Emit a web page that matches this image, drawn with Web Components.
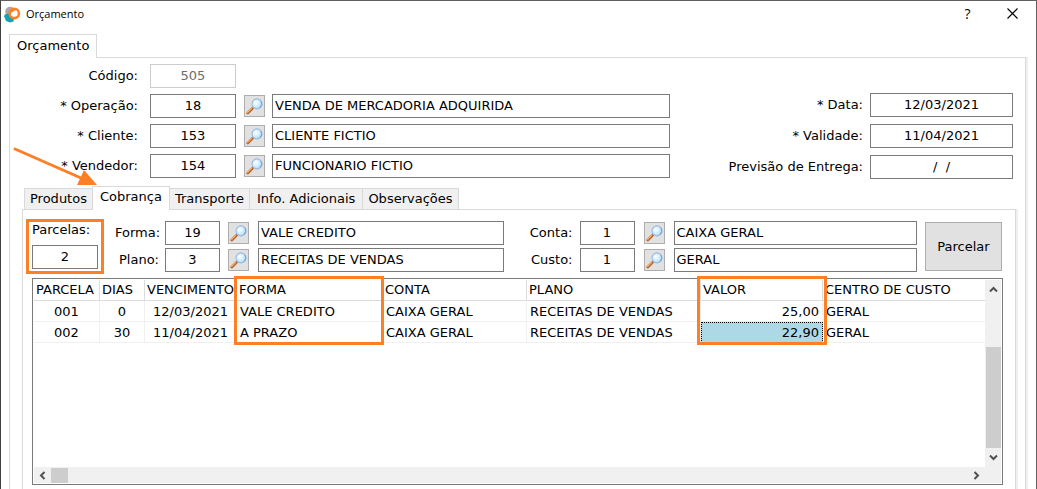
<!DOCTYPE html>
<html lang="pt-BR">
<head>
<meta charset="utf-8">
<title>Orçamento</title>
<style>
  body { margin: 0; background: #fff; color: #000; font: 13px/16px "DejaVu Sans", Verdana, sans-serif; }
</style>
</head>
<body>
<budget-window></budget-window>

<script>
const define = (name, html, setup) => {
  const template = document.createElement('template');
  template.innerHTML = '<style>*, :host { box-sizing: border-box }</style>' + html;
  customElements.define(name, class extends HTMLElement {
    constructor() {
      super();
      this.attachShadow({ mode: 'open' }).append(template.content.cloneNode(true));
    }
    connectedCallback() { if (setup) setup(this, this.shadowRoot); }
  });
};

/* Square button with a magnifying glass */
define('search-button', `
  <style>
    :host { display: block; flex: none; }
    button { display: flex; align-items: center; justify-content: center; width: 21px; height: 22px;
      padding: 0; border: 1px solid #adadad; background: #e1e1e1; }
  </style>
  <button type="button" aria-label="Pesquisar">
    <svg width="17" height="17" viewBox="0 0 17 17" aria-hidden="true">
      <defs>
        <radialGradient id="lens" cx=".38" cy=".38" r=".7">
          <stop offset="0" stop-color="#fff"/><stop offset=".5" stop-color="#d2effd"/><stop offset="1" stop-color="#9ed4f6"/>
        </radialGradient>
      </defs>
      <path d="M7.6 9.4 5.8 11.2" stroke="#8fa0b8" stroke-width="2"/>
      <path d="M6 10.8 1.8 15" stroke="#b5652f" stroke-width="2.8" stroke-linecap="round"/>
      <path d="M5.3 10.6 1.6 14.2" stroke="#f5b06c" stroke-width="1.4" stroke-linecap="round"/>
      <circle cx="11" cy="5.9" r="5" fill="url(#lens)" stroke="#9db8e0" stroke-width="1.1"/>
      <path d="M15 3.2a4.9 4.9 0 0 1-1.2 6.4" fill="none" stroke="#7f9fd2" stroke-width="1"/>
    </svg>
  </button>`);

/* Label and one text box */
define('text-field', `
  <style>
    :host { display: flex; align-items: center; justify-content: flex-end; gap: var(--gap, 7px); }
    :host([stacked]) { flex-direction: column; align-items: flex-start; gap: 7px; }
    label { white-space: pre; }
    input { width: var(--field-width, 143px); height: 24px; padding: 0 4px 2px; border: 1px solid #7a7a7a; border-radius: 0;
      background: #fff; color: #000; font: inherit; text-align: center; outline: 0; }
    input:disabled { border-color: #ccc; color: #6d6d6d; }
  </style>
  <label for="box"></label><input id="box" type="text">`,
  (host, root) => {
    root.querySelector('label').textContent = host.getAttribute('label');
    const box = root.querySelector('input');
    box.value = host.getAttribute('value');
    box.disabled = host.hasAttribute('disabled');
  });

/* Label, code box, search button and description box */
define('lookup-field', `
  <style>
    :host { display: flex; align-items: center; }
    label { width: var(--label-width); text-align: right; white-space: nowrap; flex: none; }
    input { height: 24px; border: 1px solid #7a7a7a; border-radius: 0; background: #fff; color: #000; font: inherit; outline: 0; }
    #code { width: var(--code-width); margin: 0 var(--code-gap, 8px) 0 var(--gap, 6px); padding: 0 2px 2px; text-align: center; flex: none; }
    #name { flex: 1; min-width: 0; margin-left: var(--name-gap, 9px); padding: 0 2px 2px; }
  </style>
  <label for="code"></label><input id="code" type="text"><search-button></search-button><input id="name" type="text" aria-label="Descrição">`,
  (host, root) => {
    root.querySelector('label').textContent = host.getAttribute('label');
    root.querySelector('#code').value = host.getAttribute('code');
    root.querySelector('#name').value = host.getAttribute('name');
  });

define('page-tab', `
  <style>
    :host { display: block; flex: none; }
    button { height: 21px; padding: 0 5px; border: 1px solid #d9d9d9; border-bottom: 0; margin-left: -1px;
      background: #f0f0f0; color: #000; font: inherit; display: block; }
    :host([wide]) button { padding: 0 7px; }
    :host([selected]) button { position: relative; height: 24px; margin-bottom: -1px; padding: 0 7px 3px; background: #fff; }
  </style>
  <button type="button" role="tab"><slot></slot></button>`);

define('title-bar', `
  <style>
    :host { display: flex; align-items: center; height: 25px; padding: 0 17px 0 3px; font: 12px/16px "Open Sans", "Noto Sans", sans-serif; }
    h1 { flex: 1; margin: 0 0 0 4px; font: inherit; font-size: 11px; }
    button { display: flex; align-items: center; justify-content: center; width: 13px; height: 20px; padding: 0; border: 0; background: none; font: 14px/16px "Open Sans", sans-serif; color: #000; }
    button + button { margin-left: 32px; }
  </style>
  <svg width="18" height="18" viewBox="0 0 18 18" aria-hidden="true">
    <circle cx="6" cy="6.5" r="4.8" fill="#aaa8a8"/>
    <path d="M0 11 1.5 9l3-.5 5.5 4.5-.5 3.5-3.5 1-4-1.5z" fill="#12a2b4"/>
    <circle cx="10.3" cy="8.5" r="4.6" fill="#fff" stroke="#ff7f27" stroke-width="2.6"/>
    <path d="M7.4 8.2 8.8 7.2l1.4.2 1.5-1.9 1.4.6v4.7l-4.9.5-.8-.6z" fill="#fff"/>
    <path d="M6.2 4.4h5.2L10 6.3 7.4 7.4 6 9z" fill="#ff7f27"/>
  </svg>
  <h1>Orçamento</h1>
  <button type="button" aria-label="Ajuda">?</button>
  <button type="button" aria-label="Fechar"><svg width="11" height="11" viewBox="0 0 11 11"><path d="M.5.5l10 10M10.5.5l-10 10" stroke="#000" stroke-width="1.1"/></svg></button>`);

define('installment-grid', `
  <style>
    :host { position: relative; display: grid; grid-template: 1fr 16px / 1fr 16px; border: 1px solid #7a7a7a; padding: 1px; min-height: 120px; }
    .view { overflow: hidden; }
    table { width: 100%; table-layout: fixed; border-collapse: separate; border-spacing: 0; }
    th, td { height: 21px; padding: 0 2px; border: solid #f0f0f0; border-width: 0 1px 1px 0; font-weight: normal; text-align: left; white-space: nowrap; overflow: hidden; line-height: 16px; }
    th { border-color: #dcdcdc; }
    th:last-child, td:last-child { border-right: 0; }
    td { padding: 1px 3px 0; }
    .mid { text-align: center; }
    .num { text-align: right; }
    .active { background: #add8e6; border: 1px dotted #000; }
    .bar { display: flex; justify-content: space-between; align-items: center; background: #f0f0f0; }
    .bar.v { flex-direction: column; }
    .bar button { width: 17px; height: 19px; padding: 0; border: 0; background: none; display: flex; align-items: center; justify-content: center; flex: none; }
    .bar.h button { height: 16px; }
    .thumb { background: #cdcdcd; }
    .v .thumb { width: 15px; height: 101px; margin: auto 0 0; }
    .h .thumb { width: 17px; height: 15px; margin-right: auto; }
    .corner { background: #f0f0f0; }
    path { fill: none; stroke: #505050; stroke-width: 2; }
    .mark { position: absolute; top: -3px; height: 69px; border: 3px solid #ff7f27; pointer-events: none; }
    .forma { left: 201px; width: 150px; }
    .valor { left: 664px; width: 130px; }
  </style>
  <div class="view">
    <table>
      <colgroup><col style="width:66px"><col style="width:45px"><col style="width:92px"><col style="width:146px"><col style="width:144px"><col style="width:174px"><col style="width:122px"><col></colgroup>
      <thead><tr><th>PARCELA</th><th>DIAS</th><th>VENCIMENTO</th><th>FORMA</th><th>CONTA</th><th>PLANO</th><th>VALOR</th><th>CENTRO DE CUSTO</th></tr></thead>
      <tbody>
        <tr><td class="mid">001</td><td class="mid">0</td><td class="mid">12/03/2021</td><td>VALE CREDITO</td><td>CAIXA GERAL</td><td>RECEITAS DE VENDAS</td><td class="num">25,00</td><td>GERAL</td></tr>
        <tr><td class="mid">002</td><td class="mid">30</td><td class="mid">11/04/2021</td><td>A PRAZO</td><td>CAIXA GERAL</td><td>RECEITAS DE VENDAS</td><td class="num active">22,90</td><td>GERAL</td></tr>
      </tbody>
    </table>
  </div>
  <div class="bar v">
    <button type="button" aria-label="Subir"><svg width="9" height="7"><path d="M1 5.5 4.5 2 8 5.5"/></svg></button>
    <div class="thumb"></div>
    <button type="button" aria-label="Descer"><svg width="9" height="7"><path d="M1 1.5 4.5 5 8 1.5"/></svg></button>
  </div>
  <div class="bar h">
    <button type="button" aria-label="Esquerda"><svg width="7" height="9"><path d="M5.5 1 2 4.5 5.5 8"/></svg></button>
    <div class="thumb"></div>
    <button type="button" aria-label="Direita"><svg width="7" height="9"><path d="M1.5 1 5 4.5 1.5 8"/></svg></button>
  </div>
  <div class="corner"></div>
  <div class="mark forma"></div><div class="mark valor"></div>`);

define('billing-form', `
  <style>
    :host { display: flex; align-items: flex-start; }
    .count { --field-width: 66px; margin-top: -2px; padding: 0 3px 2px; border: 3px solid #ff7f27; flex: none; }
    .pair { display: grid; gap: 3px; flex: 1 1 0; min-width: 0; --code-width: 55px; }
    .pay { --label-width: 44px; margin-left: 11px; }
    .account { --label-width: 44px; --gap: 7px; --code-gap: 9px; margin-left: 25px; }
    button { flex: none; width: 77px; height: 49px; margin: 1px 0 0 8px; padding: 0; border: 1px solid #adadad; background: #e1e1e1; color: #000; font: inherit; }
  </style>
  <text-field class="count" stacked label="Parcelas:" value="2"></text-field>
  <div class="pair pay">
    <lookup-field label="Forma:" code="19" name="VALE CREDITO"></lookup-field>
    <lookup-field label="Plano:" code="3" name="RECEITAS DE VENDAS"></lookup-field>
  </div>
  <div class="pair account">
    <lookup-field label="Conta:" code="1" name="CAIXA GERAL"></lookup-field>
    <lookup-field label="Custo:" code="1" name="GERAL"></lookup-field>
  </div>
  <button type="button">Parcelar</button>`);

define('budget-header', `
  <style>
    :host { display: flex; justify-content: space-between; align-items: flex-start; }
    .left { display: grid; gap: 6px; flex: 0 1 648px; --label-width: 116px; --code-width: 86px; --gap: 12px; --name-gap: 7px; --field-width: 86px; }
    .code { justify-self: start; width: 214px; }
    .right { display: grid; gap: 7px; margin-top: 29px; }
  </style>
  <div class="left">
    <text-field class="code" label="Código:" value="505" disabled></text-field>
    <lookup-field label="* Operação:" code="18" name="VENDA DE MERCADORIA ADQUIRIDA"></lookup-field>
    <lookup-field label="* Cliente:" code="153" name="CLIENTE FICTIO"></lookup-field>
    <lookup-field label="* Vendedor:" code="154" name="FUNCIONARIO FICTIO"></lookup-field>
  </div>
  <div class="right">
    <text-field label="* Data:" value="12/03/2021"></text-field>
    <text-field label="* Validade:" value="11/04/2021"></text-field>
    <text-field label="Previsão de Entrega:" value="/  /"></text-field>
  </div>`);

define('budget-window', `
  <style>
    :host { position: relative; display: flex; flex-direction: column; min-height: 100vh; border: solid #606060; border-width: 1px 1px 0; border-left-color: #404040; }
    .main-tab { display: block; width: max-content; height: 24px; margin: 8px 0 -1px 8px; padding: 0 7px 2px; position: relative;
      border: 1px solid #d9d9d9; border-bottom: 0; background: #fff; color: #000; font: inherit; }
    .page, .inner { display: flex; flex-direction: column; flex: 1; border: 1px solid #d9d9d9; border-bottom: 0; box-shadow: 2px 0 #f0f0f0; }
    .page { margin: 0 10px 0 8px; padding: 6px 12px 0; }
    nav { display: flex; align-items: flex-end; margin: 7px 0 0 3px; }
    .inner { margin: 0 -3px 0 0; padding: 11px 12px 4px 3px; }
    billing-form { margin-right: 1px; }
    installment-grid { flex: 1; margin: 4px 0 0 6px; }
    .arrow { position: absolute; left: 12px; top: 145px; pointer-events: none; }
  </style>
  <title-bar></title-bar>
  <button type="button" class="main-tab" role="tab">Orçamento</button>
  <section class="page">
    <budget-header></budget-header>
    <nav role="tablist">
      <page-tab>Produtos</page-tab><page-tab selected>Cobrança</page-tab><page-tab>Transporte</page-tab><page-tab wide>Info. Adicionais</page-tab><page-tab>Observações</page-tab>
    </nav>
    <div class="inner">
      <billing-form></billing-form>
      <installment-grid></installment-grid>
    </div>
  </section>
  <svg class="arrow" width="86" height="42" viewBox="0 0 86 42" aria-hidden="true">
    <path d="M2 3 68 32" stroke="#ff7f27" stroke-width="3" stroke-linecap="round"/>
    <path d="M71 24 84 39 64 39z" fill="#ff7f27"/>
  </svg>`);
</script>
</body>
</html>
